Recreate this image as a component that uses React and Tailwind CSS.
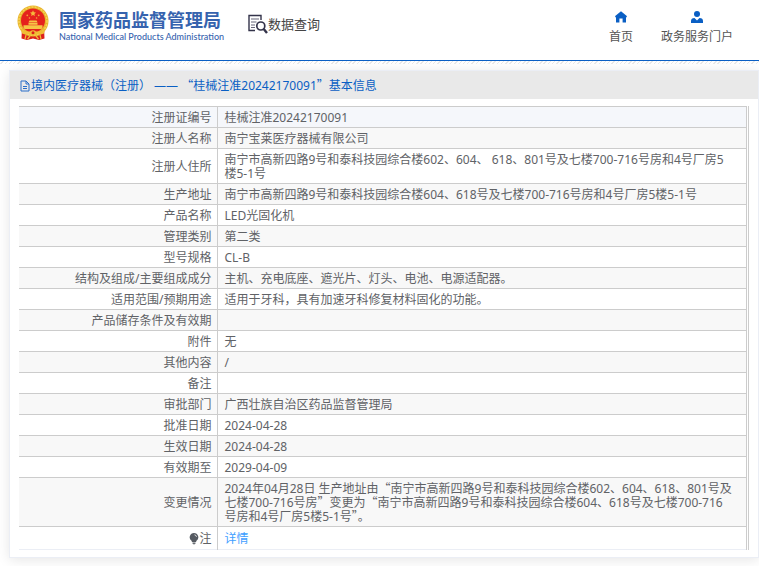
import React from "react";

const Q = ({ children }) => (
  <span className="font-['Noto_Sans_CJK_SC',sans-serif] leading-[8px]">{children}</span>
);

const rows = [
  ["注册证编号", "桂械注准20242170091"],
  ["注册人名称", "南宁宝莱医疗器械有限公司"],
  ["注册人住所", "南宁市高新四路9号和泰科技园综合楼602、604、 618、801号及七楼700-716号房和4号厂房5楼5-1号"],
  ["生产地址", "南宁市高新四路9号和泰科技园综合楼604、618号及七楼700-716号房和4号厂房5楼5-1号"],
  ["产品名称", "LED光固化机"],
  ["管理类别", "第二类"],
  ["型号规格", "CL-B"],
  ["结构及组成/主要组成成分", "主机、充电底座、遮光片、灯头、电池、电源适配器。"],
  ["适用范围/预期用途", "适用于牙科，具有加速牙科修复材料固化的功能。"],
  ["产品储存条件及有效期", ""],
  ["附件", "无"],
  ["其他内容", "/"],
  ["备注", ""],
  ["审批部门", "广西壮族自治区药品监督管理局"],
  ["批准日期", "2024-04-28"],
  ["生效日期", "2024-04-28"],
  ["有效期至", "2029-04-09"],
  [
    "变更情况",
    <>
      2024年04月28日 生产地址由<Q>“</Q>南宁市高新四路9号和泰科技园综合楼602、604、618、801号及七楼700-716号房<Q>”</Q>变更为<Q>“</Q>南宁市高新四路9号和泰科技园综合楼604、618号及七楼700-716号房和4号厂房5楼5-1号<Q>”</Q>。
    </>,
  ],
];

function Emblem() {
  return (
    <svg viewBox="0 0 32 35" className="h-9 w-8 shrink-0" aria-hidden="true">
      <path d="M5 22 L4.500 33 L10 34.500 L16 33 L22 34.500 L27.500 33 L27 22Z" fill="#dc211c" />
      <circle cx="16" cy="15.500" r="15.500" fill="#e9b52e" />
      <circle cx="16" cy="15.500" r="14" fill="none" stroke="#f6d356" strokeWidth="1.500" strokeDasharray="2 1.200" />
      <circle cx="16" cy="15" r="12" fill="#e5221d" />
      <path d="M16 4.800l.9 2 2.100.2-1.600 1.400.5 2.100-1.900-1.100-1.900 1.100.5-2.100L13 7l2.100-.2z" fill="#f6b93c" />
      <circle cx="10.300" cy="9.800" r=".9" fill="#f2a53a" />
      <circle cx="21.700" cy="9.800" r=".9" fill="#f2a53a" />
      <circle cx="12.400" cy="12.500" r=".8" fill="#f2a53a" />
      <circle cx="19.600" cy="12.500" r=".8" fill="#f2a53a" />
      <path d="M12.500 15h7l1 1.800h-9zM11.500 17.300h9v2h-9zM6.500 19.800h19v2.200l-1 1.500h-17l-1-1.500z" fill="#f6c545" />
      <path d="M4 24q5 2.500 9 2 3-2.500 6 0 4 .5 9-2l-1 4q-4 1.500-7.500.5-3.500 2.500-7 0Q9 29.500 5 28z" fill="#f0bd35" />
      <circle cx="16" cy="27.300" r="1.500" fill="#dc211c" />
      <path d="M9 29.500l-1 4M23 29.500l1 4M13 30.500l-2.500 3M19 30.500l2.500 3" stroke="#f0bd35" strokeWidth="1.200" />
    </svg>
  );
}

function QueryIcon() {
  return (
    <svg viewBox="0 0 20 20" className="h-5 w-5 shrink-0" fill="none" stroke="#33334a" aria-hidden="true">
      <path d="M7 16.500H1V1.500h12v4.500" strokeWidth="1.400" />
      <path d="M3 5h8M3 8h5.500M3 11h4M3 13.500h4" strokeWidth="1.100" stroke="#66667a" />
      <circle cx="12.800" cy="12" r="4" strokeWidth="1.700" />
      <path d="M15.700 15L19 19" strokeWidth="2.400" />
    </svg>
  );
}

function HomeIcon() {
  return (
    <svg viewBox="0 0 12 12" className="h-3 w-3" fill="#0a5fc4" aria-hidden="true">
      <path d="M6 .3L.2 4.900V6.200H1V11.500H4.400V7.600H7.600V11.500H11V6.200h.8V4.900z" />
    </svg>
  );
}

function UserIcon() {
  return (
    <svg viewBox="0 0 12 12" className="h-3 w-3" fill="#0a5fc4" aria-hidden="true">
      <circle cx="6" cy="3" r="3" />
      <path d="M0 12V10Q0 7.200 3.500 7L6 9.500 8.500 7Q12 7.200 12 10V12z" />
    </svg>
  );
}

function DocIcon() {
  return (
    <svg viewBox="0 0 11 12" className="h-3 w-3 shrink-0" fill="none" stroke="#2a6fc9" aria-hidden="true">
      <path d="M1.500 1H6.500L9.500 4V11H1.500ZM6.500 1V4H9.500M3.500 6.500H7.500M3.500 8.500H7.500" />
    </svg>
  );
}

function BulbIcon() {
  return (
    <svg viewBox="0 0 10 12" className="h-3 w-[10px]" aria-hidden="true">
      <path d="M5 0a4.300 4.300 0 0 1 2.500 7.800L7 9H3L2.500 7.800A4.300 4.300 0 0 1 5 0zM3.500 9.600h3v1.200H5.500v.7h-1v-.7h-1z" fill="#555a61" />
      <path d="M5.500 1.800q1.800.3 2 2" stroke="#fff" strokeWidth=".8" fill="none" />
    </svg>
  );
}

export default function App() {
  return (
    <div className="bg-white pb-2 font-['Noto_Sans','Noto_Sans_CJK_SC',sans-serif] text-xs text-[#606266]">
      <header className="flex h-[61px] items-start border-b border-[#0a5fc4] pr-[26px] pl-[17px]">
        <div className="flex pt-[5px]">
          <Emblem />
          <div className="ml-[10px] pt-[2px] text-[#3663ae]">
            <h1 className="font-['Noto_Sans_CJK_SC',sans-serif] text-[18px] leading-6 font-bold whitespace-nowrap">国家药品监督管理局</h1>
            <p className="font-['Lato',sans-serif] text-[9px] leading-3 font-medium whitespace-nowrap">National Medical Products Administration</p>
          </div>
        </div>
        <div className="ml-6 flex items-center pt-[14px] text-[#444]">
          <QueryIcon />
          <span className="text-[13px] leading-5 whitespace-nowrap">数据查询</span>
        </div>
        <nav className="ml-auto flex gap-7 pt-[11px] text-[#555]">
          <a href="#home" className="flex flex-col items-center gap-[6px] leading-4 whitespace-nowrap">
            <HomeIcon />
            首页
          </a>
          <a href="#portal" className="flex flex-col items-center gap-[6px] leading-4 whitespace-nowrap">
            <UserIcon />
            政务服务门户
          </a>
        </nav>
      </header>
      <div className="h-[3px] bg-[repeating-linear-gradient(135deg,#ffffff_0px,#ffffff_2px,#e9e9e9_2px,#e9e9e9_3px)]" />
      <main className="mt-[6px] ml-[9px] border border-[#ebeef5] bg-white shadow-[0_2px_12px_rgba(0,0,0,0.1)]">
        <h2 className="flex h-7 items-center bg-[#e9e9e9] pt-[2px] pl-[9px] text-[#0a5fc4]">
          <DocIcon />
          <span>
            境内医疗器械（注册） —— <Q>“</Q>桂械注准20242170091<Q>”</Q>基本信息
          </span>
        </h2>
        <div className="mt-[7px] mr-[9px] mb-[7px] ml-[9px] border-r border-[#ccc] pr-px">
          <table className="w-full table-fixed border-collapse border-t border-[#ccc] leading-[14px]">
            <colgroup>
              <col className="w-[198px]" />
              <col />
            </colgroup>
            <tbody>
              {rows.map(([label, value], i) => (
                <tr
                  key={label}
                  className={
                    "h-[21px] border-b border-[#ccc] " +
                    (i === 0 ? "bg-[#f5f7fb]" : i % 2 ? "bg-[#f8f8f8]" : "bg-white")
                  }
                >
                  <th scope="row" className="border-r border-[#ccc] pt-1 pr-[5px] pb-[2px] text-right font-normal">{label}</th>
                  <td className="border-r border-[#ccc] pt-1 pr-3 pb-[2px] pl-[7px]">{value}</td>
                </tr>
              ))}
              <tr className="h-[23px] border-b border-[#ebeef5]">
                <th scope="row" className="border-r border-[#ccc] pt-1 pr-[5px] pb-[2px] font-normal">
                  <span className="flex items-center justify-end">
                    <BulbIcon />注
                  </span>
                </th>
                <td className="border-r border-[#ccc] pt-1 pb-[2px] pl-[7px]">
                  <a href="#detail" className="text-[#409eff]">详情</a>
                </td>
              </tr>
            </tbody>
          </table>
        </div>
      </main>
    </div>
  );
}
